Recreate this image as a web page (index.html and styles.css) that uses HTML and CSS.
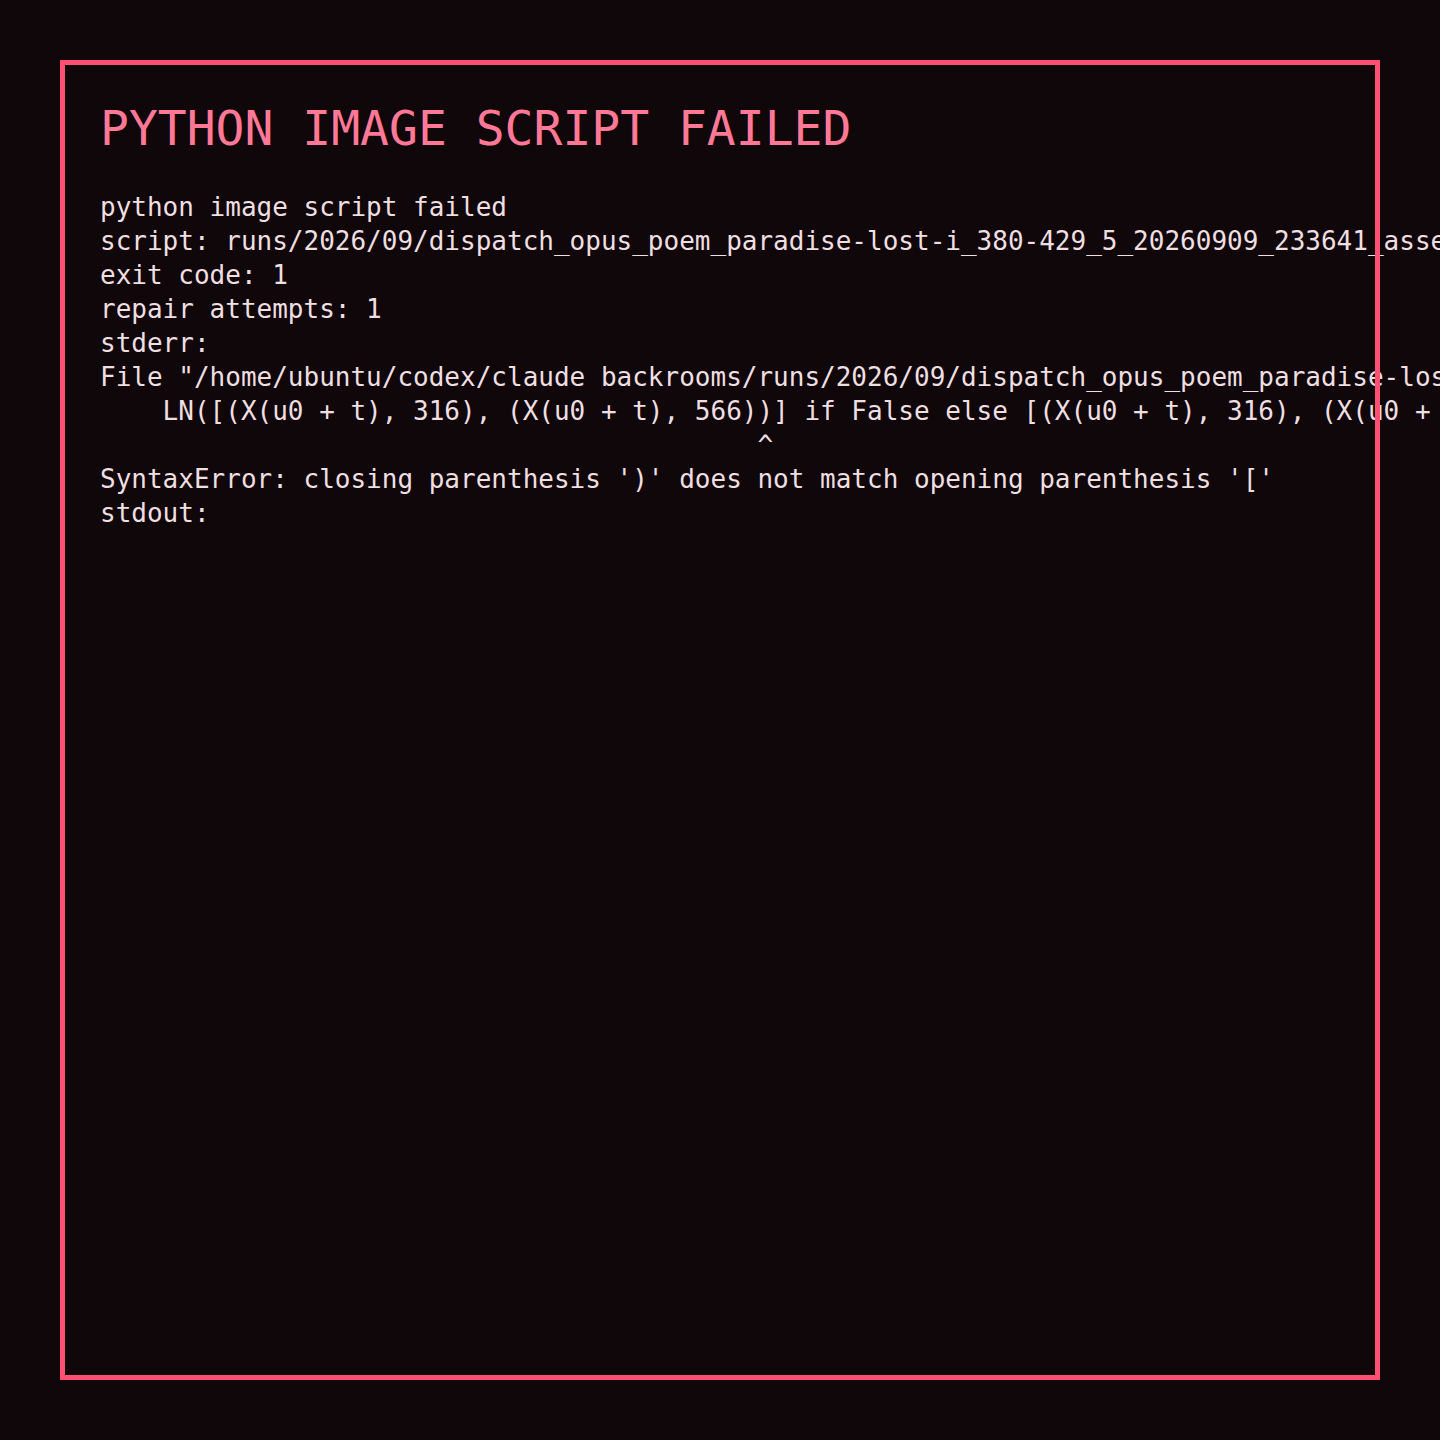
FILE: index.html
```html
<!DOCTYPE html>
<html lang="en">
<head>
<meta charset="utf-8">
<title>Python image script failed</title>
<link rel="stylesheet" href="styles.css">
</head>
<body>
<main class="frame">
<h1 class="title">PYTHON IMAGE SCRIPT FAILED</h1>
<pre class="log">python image script failed
script: runs/2026/09/dispatch_opus_poem_paradise-lost-i_380-429_5_20260909_233641_assets/render_image.py
exit code: 1
repair attempts: 1
stderr:
File "/home/ubuntu/codex/claude backrooms/runs/2026/09/dispatch_opus_poem_paradise-lost-i_380-429_5_20260909_233641_assets/render_image.py", line 84
    LN([(X(u0 + t), 316), (X(u0 + t), 566))] if False else [(X(u0 + t), 316), (X(u0 + t), 566)]
                                          ^
SyntaxError: closing parenthesis ')' does not match opening parenthesis '['
stdout:</pre>
</main>
</body>
</html>
```
FILE: styles.css
```css
html {
  overflow: hidden;
  background: #10070a;
}
body {
  margin: 0;
  background: #10070a;
  font-family: "DejaVu Sans Mono", "Liberation Mono", monospace;
}
.frame {
  position: relative;
  box-sizing: border-box;
  margin: 60px;
  width: 1320px;
  height: 1320px;
  padding: 44px 40px;
}
.frame::after {
  content: "";
  position: absolute;
  inset: 0;
  border: 5px solid #ff4f73;
  pointer-events: none;
}
.title {
  margin: 0 0 38px 0;
  font-size: 48px;
  line-height: 48px;
  font-weight: normal;
  color: #ff7896;
  white-space: nowrap;
}
.log {
  margin: 0;
  font-family: "DejaVu Sans Mono", "Liberation Mono", monospace;
  font-size: 26px;
  line-height: 34px;
  color: #efdfe0;
  white-space: pre;
}
```
